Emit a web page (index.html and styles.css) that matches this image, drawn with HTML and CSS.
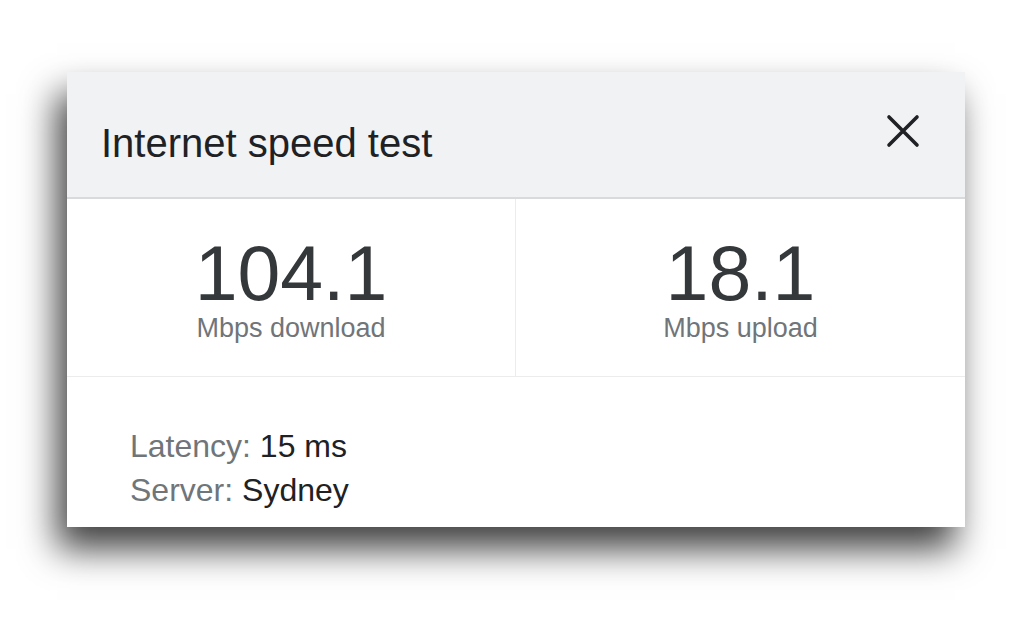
FILE: index.html
```html
<!DOCTYPE html>
<html lang="en">
<head>
<meta charset="utf-8">
<title>Internet speed test</title>
<link rel="stylesheet" href="styles.css">
</head>
<body>
<div class="card">
  <div class="header">
    <h1 class="title">Internet speed test</h1>
    <svg class="close" width="34" height="34" viewBox="0 0 34 34" aria-label="Close">
      <path d="M3 3 L31 31 M31 3 L3 31" stroke="#202124" stroke-width="3.6" stroke-linecap="round" fill="none"/>
    </svg>
  </div>
  <div class="stats">
    <div class="stat stat-left">
      <div class="num">104.1</div>
      <div class="unit">Mbps download</div>
    </div>
    <div class="stat">
      <div class="num">18.1</div>
      <div class="unit">Mbps upload</div>
    </div>
  </div>
  <div class="info">
    <div class="line"><span class="key">Latency:</span> <span class="val">15 ms</span></div>
    <div class="line"><span class="key">Server:</span> <span class="val">Sydney</span></div>
  </div>
</div>
</body>
</html>
```
FILE: styles.css
```css
html, body {
  margin: 0;
  padding: 0;
  background: #ffffff;
}
body {
  width: 1024px;
  height: 639px;
  overflow: hidden;
  font-family: "Liberation Sans", Arial, sans-serif;
  padding: 72px 0 0 67px;
  box-sizing: border-box;
}
.card {
  width: 898px;
  height: 455px;
  background: #ffffff;
  box-shadow: -10px 22px 34px rgba(0, 0, 0, 0.75);
  display: flex;
  flex-direction: column;
}
.header {
  background: #f1f2f4;
  height: 125px;
  border-bottom: 2px solid #d9dadc;
  display: flex;
  justify-content: space-between;
  align-items: flex-start;
  padding: 0 45px 0 34px;
}
.title {
  margin: 0;
  padding-top: 47px;
  font-size: 40px;
  line-height: 48px;
  font-weight: 400;
  color: #202124;
}
.close {
  margin-top: 42px;
  display: block;
}
.stats {
  display: grid;
  grid-template-columns: 449px 449px;
  height: 177px;
  border-bottom: 1px solid #ececec;
}
.stat {
  display: flex;
  flex-direction: column;
  align-items: center;
  padding-top: 36px;
}
.stat-left {
  border-right: 1px solid #ececec;
}
.num {
  font-size: 77px;
  line-height: 76px;
  color: #35383b;
}
.unit {
  margin-top: 3px;
  font-size: 27px;
  line-height: 28px;
  color: #70757a;
}
.info {
  padding: 47px 0 0 63px;
}
.line {
  font-size: 32px;
  line-height: 44px;
}
.key {
  color: #70757a;
}
.val {
  color: #202124;
}
```
